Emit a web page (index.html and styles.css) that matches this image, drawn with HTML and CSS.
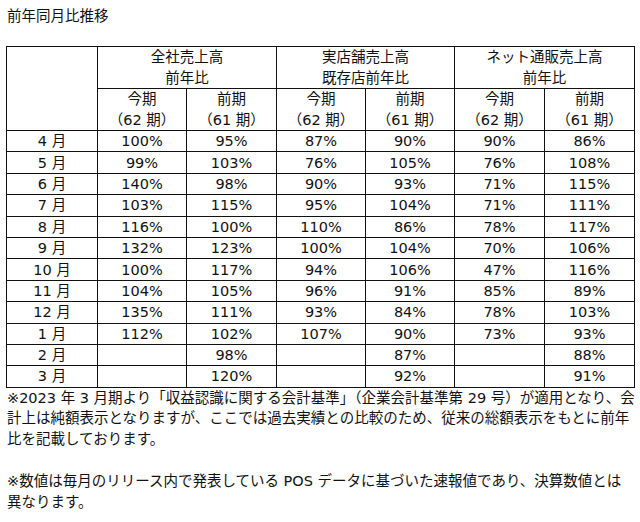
FILE: index.html
```html
<!DOCTYPE html>
<html lang="ja">
<head>
<meta charset="utf-8">
<link rel="stylesheet" href="styles.css">
</head>
<body>
<div class="page">
  <h1 class="title">前年同月比推移</h1>
  <table class="yoy">
    <colgroup>
      <col class="c-month"><col class="c2"><col class="c3"><col class="c4"><col class="c5"><col class="c6"><col class="c7">
    </colgroup>
    <thead>
      <tr class="hrow">
        <th rowspan="2"></th>
        <th colspan="2">全社売上高<br>前年比</th>
        <th colspan="2">実店舗売上高<br>既存店前年比</th>
        <th colspan="2">ネット通販売上高<br>前年比</th>
      </tr>
      <tr class="hrow">
        <th>今期<br>（62 期）</th>
        <th>前期<br>（61 期）</th>
        <th>今期<br>（62 期）</th>
        <th>前期<br>（61 期）</th>
        <th>今期<br>（62 期）</th>
        <th>前期<br>（61 期）</th>
      </tr>
    </thead>
    <tbody>
      <tr><td>4 月</td><td>100%</td><td>95%</td><td>87%</td><td>90%</td><td>90%</td><td>86%</td></tr>
      <tr><td>5 月</td><td>99%</td><td>103%</td><td>76%</td><td>105%</td><td>76%</td><td>108%</td></tr>
      <tr><td>6 月</td><td>140%</td><td>98%</td><td>90%</td><td>93%</td><td>71%</td><td>115%</td></tr>
      <tr><td>7 月</td><td>103%</td><td>115%</td><td>95%</td><td>104%</td><td>71%</td><td>111%</td></tr>
      <tr><td>8 月</td><td>116%</td><td>100%</td><td>110%</td><td>86%</td><td>78%</td><td>117%</td></tr>
      <tr><td>9 月</td><td>132%</td><td>123%</td><td>100%</td><td>104%</td><td>70%</td><td>106%</td></tr>
      <tr><td>10 月</td><td>100%</td><td>117%</td><td>94%</td><td>106%</td><td>47%</td><td>116%</td></tr>
      <tr><td>11 月</td><td>104%</td><td>105%</td><td>96%</td><td>91%</td><td>85%</td><td>89%</td></tr>
      <tr><td>12 月</td><td>135%</td><td>111%</td><td>93%</td><td>84%</td><td>78%</td><td>103%</td></tr>
      <tr><td>1 月</td><td>112%</td><td>102%</td><td>107%</td><td>90%</td><td>73%</td><td>93%</td></tr>
      <tr><td>2 月</td><td></td><td>98%</td><td></td><td>87%</td><td></td><td>88%</td></tr>
      <tr><td>3 月</td><td></td><td>120%</td><td></td><td>92%</td><td></td><td>91%</td></tr>
    </tbody>
  </table>
  <p class="note">※2023 年 3 月期より「収益認識に関する会計基準」（企業会計基準第 29 号）が適用となり、会<br>計上は純額表示となりますが、ここでは過去実績との比較のため、従来の総額表示をもとに前年<br>比を記載しております。</p>
  <p class="note">※数値は毎月のリリース内で発表している POS データに基づいた速報値であり、決算数値とは<br>異なります。</p>
</div>
</body>
</html>
```

FILE: styles.css
```css
html, body {
  margin: 0;
  padding: 0;
  background: #ffffff;
}

body {
  font-family: "DejaVu Sans", "Noto Sans CJK JP", sans-serif;
  font-size: 14.5px;
  color: #111111;
}

.page {
  padding: 6px 6px 0 6px;
  width: 628px;
}

.title {
  margin: 0 0 19px 1px;
  font-size: 14.5px;
  font-weight: normal;
  line-height: 21px;
}

.yoy {
  border-collapse: collapse;
  table-layout: fixed;
  width: 628px;
}

.c-month { width: 91px; }
.c2 { width: 89px; }
.c3 { width: 90px; }
.c4 { width: 89px; }
.c5 { width: 89px; }
.c6 { width: 90px; }
.c7 { width: 90px; }

.yoy th,
.yoy td {
  border: 1px solid #111111;
  padding: 0;
  text-align: center;
  vertical-align: middle;
  font-weight: normal;
  white-space: nowrap;
}

.yoy th {
  height: 41px;
  line-height: 20.5px;
}

.yoy td {
  height: 20.4px;
  line-height: 20px;
}

.note {
  margin: 0 0 21px 1px;
  line-height: 20.8px;
  white-space: nowrap;
}
```
